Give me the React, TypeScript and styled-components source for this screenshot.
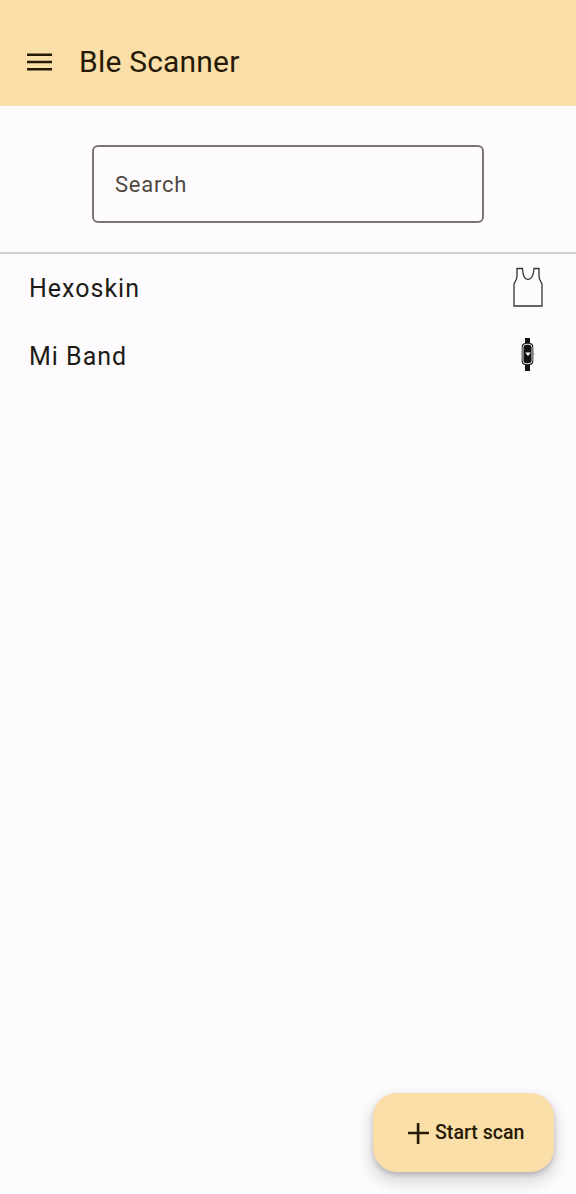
import * as React from 'react'
import styled, { createGlobalStyle } from 'styled-components'

const GlobalStyle = createGlobalStyle`
	html, body {
		margin: 0;
		padding: 0;
		background: #fdfbfe;
	}
	body {
		font-family: Roboto, "Liberation Sans", sans-serif;
	}
`

const Screen = styled.div`
	width: 576px;
	height: 1194px;
	display: flex;
	flex-direction: column;
	position: relative;
	overflow: hidden;
	background: #fdfbfe;
`

const AppBar = styled.header`
	height: 106px;
	flex-shrink: 0;
	box-sizing: border-box;
	padding: 18px 0 0 25px;
	display: flex;
	align-items: center;
	background: #fbdfa9;
	color: #261a07;
`

const MenuIcon = styled.svg`
	width: 30px;
	height: 30px;
	display: block;
`

const AppTitle = styled.h1`
	margin: 0 0 0 24px;
	font-size: 30px;
	font-weight: 400;
	line-height: 36px;
	letter-spacing: 0.2px;
`

const SearchWrap = styled.div`
	display: flex;
	justify-content: center;
	padding: 39px 0 29px;
	border-bottom: 2px solid #d2d0d3;
`

const SearchField = styled.div`
	width: 392px;
	height: 78px;
	box-sizing: border-box;
	padding-left: 21px;
	display: flex;
	align-items: center;
	border: 2px solid #7c7672;
	border-radius: 6px;
	color: #4f4841;
	font-size: 22px;
	letter-spacing: 0.75px;
`

const DeviceList = styled.ul`
	margin: 0;
	padding: 0;
	list-style: none;
`

const DeviceRow = styled.li`
	height: 68px;
	box-sizing: border-box;
	padding: 0 33px 0 29px;
	display: flex;
	align-items: center;
	justify-content: space-between;
`

const DeviceName = styled.span`
	font-size: 25px;
	letter-spacing: 1px;
	color: #1e1b16;
`

const DeviceIcon = styled.svg`
	width: 30px;
	height: 42px;
	display: block;
`

const ScanButton = styled.button`
	position: absolute;
	left: 373px;
	top: 1093px;
	width: 181px;
	height: 79px;
	padding: 0 0 0 32px;
	display: flex;
	align-items: center;
	gap: 4px;
	border: 0;
	border-radius: 24px;
	background: #fbdfa9;
	color: #261a07;
	font-family: inherit;
	font-size: 19.600px;
	font-weight: 500;
	box-shadow: 0 8px 14px 4px rgba(0, 0, 0, 0.12), 0 3px 5px rgba(0, 0, 0, 0.18);
`

const PlusIcon = styled.svg`
	width: 26px;
	height: 26px;
	display: block;
`

export default function App() {
	return (
		<Screen>
			<GlobalStyle />
			<AppBar>
				<MenuIcon viewBox="0 0 30 30">
					<path d="M2 6.500h25V9H2zM2 13.750h25v2.500H2zM2 21h25v2.500H2z" fill="currentColor" />
				</MenuIcon>
				<AppTitle>Ble Scanner</AppTitle>
			</AppBar>
			<SearchWrap>
				<SearchField>Search</SearchField>
			</SearchWrap>
			<DeviceList>
				<DeviceRow>
					<DeviceName>Hexoskin</DeviceName>
					<DeviceIcon viewBox="0 0 30 42">
						<path
							d="M4 1.500h5.500C9.800 8 11 12.500 15 12.500S20.500 8 21 1.500h5V9c0 4 2.500 6 3 8v22H1V17c.5-2 3-4 3-8z"
							fill="none"
							stroke="#333"
							strokeWidth="1.300"
						/>
					</DeviceIcon>
				</DeviceRow>
				<DeviceRow>
					<DeviceName>Mi Band</DeviceName>
					<DeviceIcon viewBox="0 0 30 42">
						<path d="M12 3h5v33h-5z" fill="#111" />
						<rect x="8.700" y="8" width="11.600" height="22" rx="4" fill="#111" />
						<rect x="10" y="9.300" width="9" height="19.400" rx="3" fill="none" stroke="#fff" strokeWidth="0.900" />
						<path d="M12.200 17.500h5.600l-2.800 3.600z" fill="#fff" />
						<rect x="20.300" y="18.500" width="1" height="1" fill="#555" />
					</DeviceIcon>
				</DeviceRow>
			</DeviceList>
			<ScanButton>
				<PlusIcon viewBox="0 0 26 26">
					<path d="M11.800 3h2.600v8.700H24v2.600h-9.600V24h-2.600v-9.700H3v-2.600h8.800z" fill="currentColor" />
				</PlusIcon>
				Start scan
			</ScanButton>
		</Screen>
	)
}
